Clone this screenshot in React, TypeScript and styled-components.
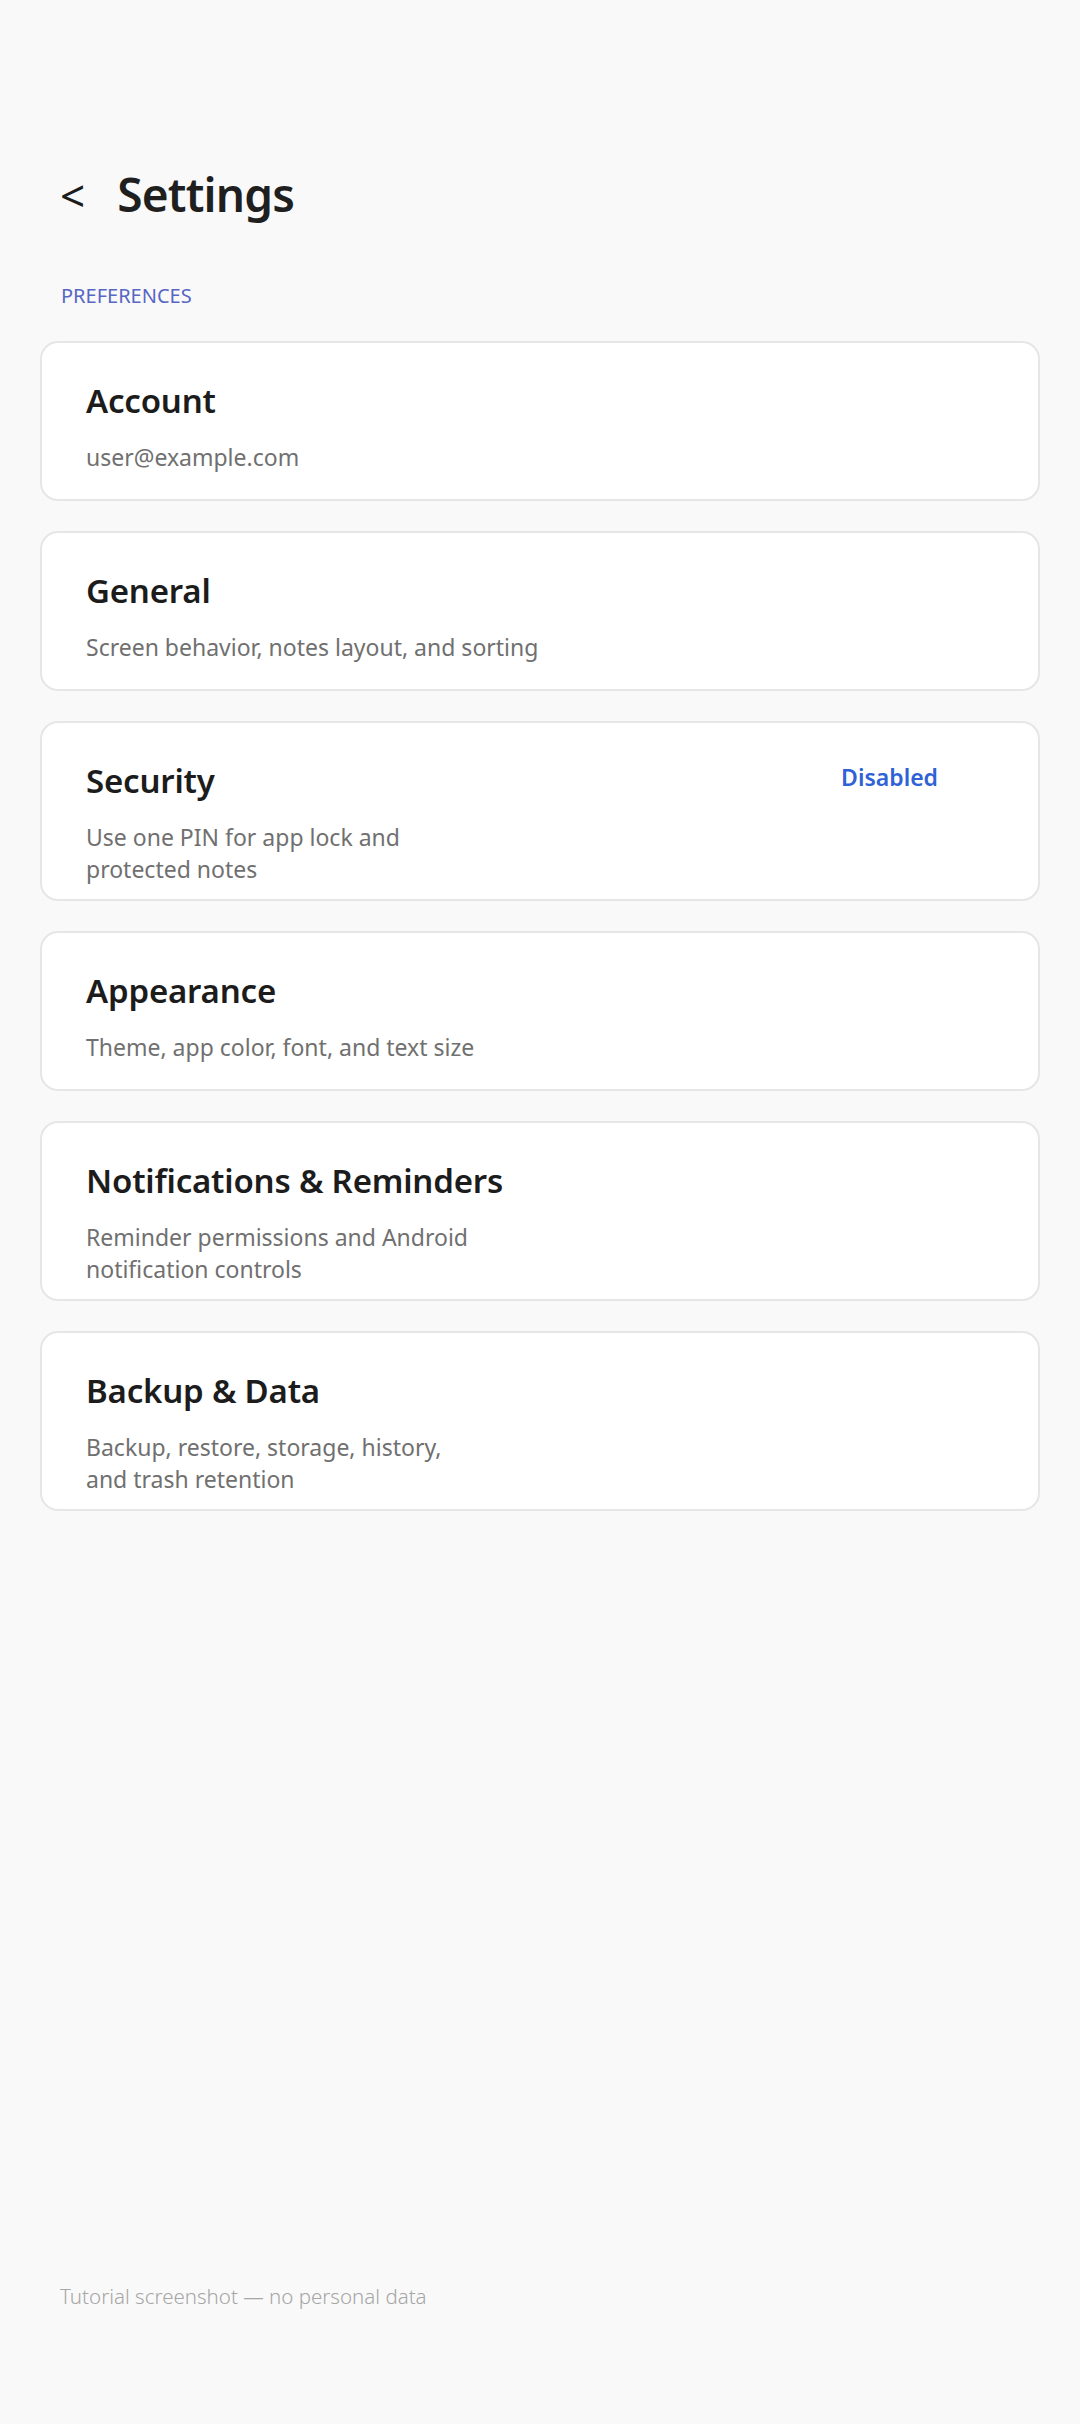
import styled, { createGlobalStyle } from "styled-components"

type SettingsItem = {
  id: string
  title: string
  lines: string[]
  value?: string
}

const items: SettingsItem[] = [
  { id: "account", title: "Account", lines: ["user@example.com"] },
  { id: "general", title: "General", lines: ["Screen behavior, notes layout, and sorting"] },
  {
    id: "security",
    title: "Security",
    lines: ["Use one PIN for app lock and", "protected notes"],
    value: "Disabled",
  },
  { id: "appearance", title: "Appearance", lines: ["Theme, app color, font, and text size"] },
  {
    id: "notifications",
    title: "Notifications & Reminders",
    lines: ["Reminder permissions and Android", "notification controls"],
  },
  {
    id: "backup",
    title: "Backup & Data",
    lines: ["Backup, restore, storage, history,", "and trash retention"],
  },
]

const GlobalStyle = createGlobalStyle`
  html, body {
    margin: 0;
    padding: 0;
    background: #f9f9f9;
  }
  body {
    font-family: "Noto Sans", "Open Sans", sans-serif;
    -webkit-font-smoothing: antialiased;
  }
  * {
    box-sizing: border-box;
  }
`

const Screen = styled.main`
  min-height: 2424px;
  display: flex;
  flex-direction: column;
  padding: 162px 40px 114px;
  background: #f9f9f9;
  color: #1c1c1c;
`

const Header = styled.header`
  display: flex;
  align-items: center;
  gap: 32px;
  padding-left: 20px;
  height: 64px;
`

const BackButton = styled.button`
  border: none;
  background: transparent;
  padding: 0;
  font-family: inherit;
  font-size: 44px;
  line-height: 1;
  color: #1c1c1c;
  cursor: pointer;
  margin-top: 2px;
`

const PageTitle = styled.h1`
  margin: 0;
  font-size: 46px;
  font-weight: 600;
  letter-spacing: -0.8px;
  color: #1f1f1f;
`

const SectionLabel = styled.h2`
  margin: 56px 0 31px 21px;
  font-size: 20px;
  font-weight: 400;
  line-height: 28px;
  color: #5866c4;
  text-transform: uppercase;
`

const CardList = styled.div`
  display: flex;
  flex-direction: column;
  gap: 30px;
`

const Card = styled.button`
  display: flex;
  align-items: flex-start;
  gap: 24px;
  width: 100%;
  min-height: 160px;
  padding: 36px 100px 14px 44px;
  border: 2px solid #e6e6e6;
  border-radius: 18px;
  background: #ffffff;
  text-align: left;
  font-family: inherit;
  cursor: pointer;
`

const CardText = styled.div`
  flex: 1;
  display: flex;
  flex-direction: column;
  gap: 18px;
`

const CardTitle = styled.span`
  font-size: 33px;
  font-weight: 600;
  line-height: 44px;
  letter-spacing: -0.2px;
  color: #1c1c1c;
`

const CardSubtitle = styled.span`
  font-size: 23px;
  line-height: 32px;
  color: #707070;
`

const CardValue = styled.span`
  font-size: 23px;
  font-weight: 600;
  line-height: 36px;
  color: #2f62d6;
`

const Footer = styled.footer`
  margin-top: auto;
  padding-left: 20px;
  font-size: 20.5px;
  font-weight: 300;
  line-height: 28px;
  color: #a6a6a6;
`

export default function App() {
  return (
    <>
      <GlobalStyle />
      <Screen>
        <Header>
          <BackButton aria-label="Back">&lt;</BackButton>
          <PageTitle>Settings</PageTitle>
        </Header>
        <SectionLabel>Preferences</SectionLabel>
        <CardList>
          {items.map((item) => (
            <Card key={item.id}>
              <CardText>
                <CardTitle>{item.title}</CardTitle>
                <CardSubtitle>
                  {item.lines.map((line, i) => (
                    <span key={i}>
                      {i > 0 && <br />}
                      {line}
                    </span>
                  ))}
                </CardSubtitle>
              </CardText>
              {item.value && <CardValue>{item.value}</CardValue>}
            </Card>
          ))}
        </CardList>
        <Footer>Tutorial screenshot — no personal data</Footer>
      </Screen>
    </>
  )
}
